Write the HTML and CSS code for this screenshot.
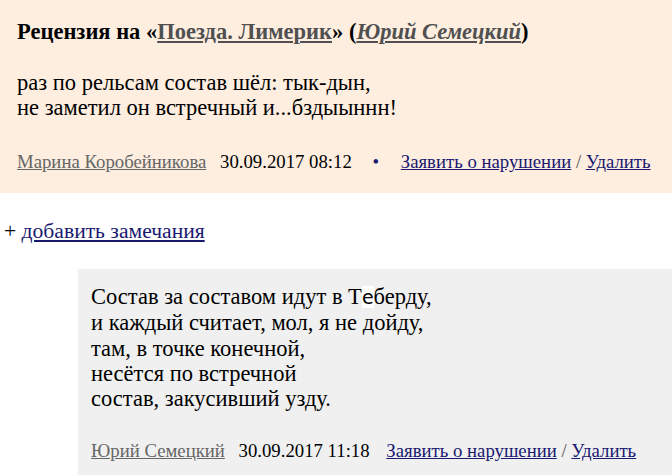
FILE: index.html
```html
<!DOCTYPE html>
<html lang="ru">
<head>
    <meta charset="UTF-8">
    <title>Рецензия</title>
    <link rel="stylesheet" href="styles.css">
</head>
<body>
    <div class="review">
        <h2 class="review-title">Рецензия на «<a href="#">Поезда. Лимерик</a>» (<a href="#"><i>Юрий Семецкий</i></a>)</h2>
        <div class="review-text">
            раз по рельсам состав шёл: тык-дын,<br>
            не заметил он встречный и...бздыыннн!
        </div>
        <div class="meta">
            <a class="author" href="#">Марина Коробейникова</a>
            <span class="date">30.09.2017 08:12</span>
            <span class="dot">•</span>
            <a class="action" href="#">Заявить о нарушении</a> / <a class="action" href="#">Удалить</a>
        </div>
    </div>

    <div class="add-note">+ <a href="#">добавить замечания</a></div>

    <div class="reply">
        <div class="review-text">
            Состав за составом идут в Т<span class="odd-letter">е</span>берду,<br>
            и каждый считает, мол, я не дойду,<br>
            там, в точке конечной,<br>
            несётся по встречной<br>
            состав, закусивший узду.
        </div>
        <div class="meta">
            <a class="author" href="#">Юрий Семецкий</a>
            <span class="date">30.09.2017 11:18</span>
            <a class="action" href="#">Заявить о нарушении</a> / <a class="action" href="#">Удалить</a>
        </div>
    </div>
</body>
</html>
```

FILE: styles.css
```css
body {
    font-family: 'Liberation Serif', 'Times New Roman', serif;
    background: white;
    color: black;
    margin: 0;
}

.review {
    background: #fdeee0;
    padding: 20px 17px 20px;
}

.review-title {
    font-size: 22.5px;
    line-height: 24px;
    margin: 0 0 26px;
}

.review-title a {
    color: #505050;
}

.review-text {
    font-size: 22.5px;
    line-height: 25px;
}

.meta {
    font-size: 18.75px;
    line-height: 22px;
    margin-top: 31px;
    color: #555;
}

.meta .author {
    color: #666;
    margin-right: 9px;
}

.meta .date {
    color: black;
    margin-right: 12px;
}

.review .meta .date {
    margin-right: 16px;
}

.meta .dot {
    color: #191970;
    margin-right: 17px;
}

.meta .action {
    color: #191970;
}

.add-note {
    font-size: 21.6px;
    line-height: 25px;
    margin: 26px 0 0 4px;
}

.add-note a {
    color: #191970;
}

.reply {
    background: #f0f0f0;
    margin: 25px 0 0 78px;
    padding: 15px 13px 20px;
}

.reply .review-text {
    line-height: 25.3px;
}

.reply .meta {
    margin-top: 29px;
}

.odd-letter {
    font-family: 'DejaVu Sans', sans-serif;
    font-size: 19px;
    background: white;
}
```
